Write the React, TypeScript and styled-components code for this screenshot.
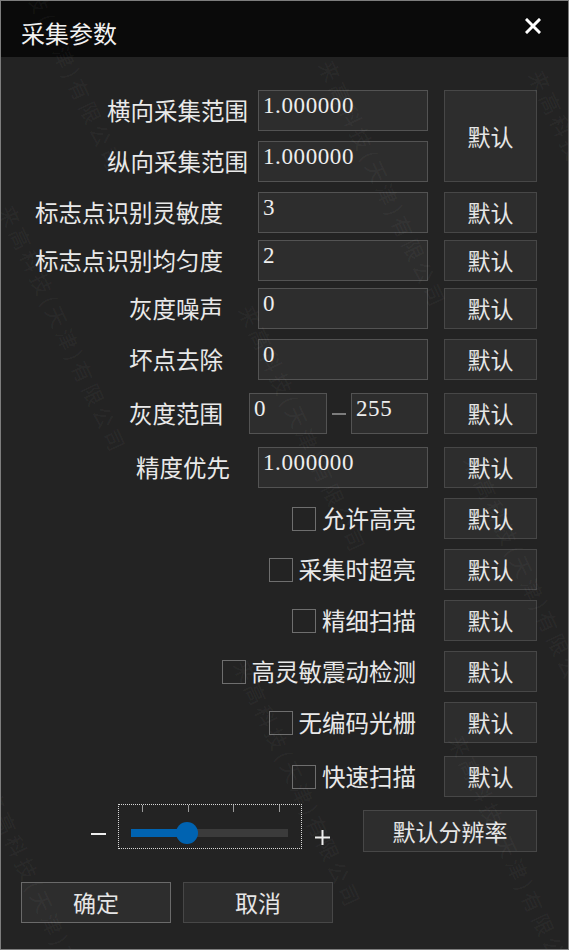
import React, { useState } from "react";
import styled, { createGlobalStyle } from "styled-components";

interface RowProps {
  $mt?: number;
}

interface LabelProps {
  $pr?: number;
}

interface ButtonProps {
  $h?: number;
  $w?: number;
  $ml?: number;
  $primary?: boolean;
}

const marks = [
  { x: 2, y: -92 },
  { x: 5, y: 190 },
  { x: 325, y: 45 },
  { x: 535, y: 55 },
  { x: 245, y: 290 },
  { x: 470, y: 440 },
  { x: 240, y: 645 },
  { x: -10, y: 775 },
  { x: 455, y: 720 },
];

const WATERMARK = "来高科技(天津)有限公司";

function Checkbox({ label, checked, onToggle }: { label: string; checked: boolean; onToggle: () => void }) {
  return (
    <CheckLabel onClick={onToggle}>
      <Box>{checked ? "✓" : ""}</Box>
      <span>{label}</span>
    </CheckLabel>
  );
}

function App() {
  const [checks, setChecks] = useState<boolean[]>([false, false, false, false, false, false]);
  const sliderFill = 56;

  const toggle = (i: number) => {
    const next = [...checks];
    next[i] = !next[i];
    setChecks(next);
  };

  const options = [
    { label: "允许高亮", mt: 10 },
    { label: "采集时超亮", mt: 10 },
    { label: "精细扫描", mt: 10 },
    { label: "高灵敏震动检测", mt: 10 },
    { label: "无编码光栅", mt: 10 },
    { label: "快速扫描", mt: 13 },
  ];

  return (
    <>
      <GlobalStyle />
      <Window>
        <TitleBar>
          <Title>采集参数</Title>
          <Close>
            <svg width="16" height="16" viewBox="0 0 16 16">
              <path d="M2 2 L14 14 M14 2 L2 14" stroke="#fff" strokeWidth="3" strokeLinecap="square" />
            </svg>
          </Close>
        </TitleBar>

        <Body>
          <Pair>
            <PairRows>
              <Row>
                <Label>横向采集范围</Label>
                <Field>1.000000</Field>
              </Row>
              <Row>
                <Label>纵向采集范围</Label>
                <Field>1.000000</Field>
              </Row>
            </PairRows>
            <DefaultButton $h={92}>默认</DefaultButton>
          </Pair>

          <Row $mt={10}>
            <Label $pr={25}>标志点识别灵敏度</Label>
            <Field>3</Field>
            <DefaultButton>默认</DefaultButton>
          </Row>
          <Row $mt={7}>
            <Label $pr={25}>标志点识别均匀度</Label>
            <Field>2</Field>
            <DefaultButton>默认</DefaultButton>
          </Row>
          <Row $mt={7}>
            <Label $pr={25}>灰度噪声</Label>
            <Field>0</Field>
            <DefaultButton>默认</DefaultButton>
          </Row>
          <Row $mt={10}>
            <Label $pr={25}>坏点去除</Label>
            <Field>0</Field>
            <DefaultButton>默认</DefaultButton>
          </Row>
          <Row $mt={13}>
            <Label $pr={16}>灰度范围</Label>
            <Range>
              <SmallField $w={78}>0</SmallField>
              <DashSlot>
                <Dash />
              </DashSlot>
              <SmallField $w={77}>255</SmallField>
            </Range>
            <DefaultButton>默认</DefaultButton>
          </Row>
          <Row $mt={13}>
            <Label $pr={18}>精度优先</Label>
            <Field>1.000000</Field>
            <DefaultButton>默认</DefaultButton>
          </Row>

          {options.map((opt, i) => (
            <Row key={opt.label} $mt={opt.mt}>
              <Checkbox label={opt.label} checked={checks[i]} onToggle={() => toggle(i)} />
              <DefaultButton>默认</DefaultButton>
            </Row>
          ))}

          <SliderRow>
            <Minus />
            <SliderFocus>
              <Ticks>
                <Tick />
                <Tick />
                <Tick />
                <Tick />
              </Ticks>
              <Track>
                <Fill style={{ width: sliderFill }} />
                <Thumb style={{ left: sliderFill - 11 }} />
              </Track>
            </SliderFocus>
            <Plus>
              <svg width="15" height="15" viewBox="0 0 15 15">
                <path d="M0 7.5 H15 M7.5 0 V15" stroke="#eee" strokeWidth="2" />
              </svg>
            </Plus>
            <ResolutionButton $w={174} $h={42} $ml={33}>
              默认分辨率
            </ResolutionButton>
          </SliderRow>

          <Footer>
            <FooterButton $primary>确定</FooterButton>
            <FooterButton>取消</FooterButton>
          </Footer>
        </Body>

        <Watermarks>
          {marks.map((m, i) => (
            <Mark key={i} style={{ left: m.x, top: m.y }}>
              {WATERMARK}
            </Mark>
          ))}
        </Watermarks>
      </Window>
    </>
  );
}

export default App;

const GlobalStyle = createGlobalStyle`
  body {
    margin: 0;
    background: #ffffff;
  }
  * {
    box-sizing: border-box;
  }
`;

const Window = styled.div`
  position: relative;
  overflow: hidden;
  width: 569px;
  height: 950px;
  border: 1px solid #7d7d7d;
  background-color: #232323;
  display: flex;
  flex-direction: column;
  color: #e9e9e9;
  font-family: "Noto Sans CJK SC", "Noto Sans", sans-serif;
`;

const TitleBar = styled.div`
  display: flex;
  justify-content: space-between;
  align-items: flex-start;
  height: 56px;
  padding: 0 27px 0 20px;
  background-color: #0a0a0a;
`;

const Title = styled.div`
  margin-top: 20px;
  font-size: 24px;
  line-height: 24px;
  color: #f2f2f2;
`;

const Close = styled.div`
  margin-top: 14px;
  width: 16px;
  height: 16px;
  cursor: pointer;
`;

const Body = styled.div`
  flex: 1;
  padding: 33px 31px 0 0;
`;

const Pair = styled.div`
  display: flex;
  align-items: flex-start;
`;

const PairRows = styled.div`
  flex: 1;
  display: flex;
  flex-direction: column;
  gap: 10px;
`;

const Row = styled.div<RowProps>`
  display: flex;
  align-items: center;
  height: 41px;
  margin-top: ${(p) => p.$mt || 0}px;
`;

const Label = styled.div<LabelProps>`
  flex: 1;
  text-align: right;
  padding-right: ${(p) => p.$pr || 0}px;
  font-size: 23.5px;
  line-height: 1;
  white-space: nowrap;
`;

const Field = styled.div`
  width: 170px;
  height: 41px;
  margin-left: 10px;
  padding: 3px 4px;
  border: 1px solid #535353;
  background-color: #2d2d2d;
  font-family: "Liberation Serif", serif;
  font-size: 23px;
  line-height: 23px;
  letter-spacing: 0.6px;
  color: #eeeeee;
`;

const Range = styled.div`
  display: flex;
  width: 179px;
  margin-left: 10px;
`;

const SmallField = styled(Field)<{ $w: number }>`
  width: ${(p) => p.$w}px;
  margin-left: 0;
`;

const DashSlot = styled.div`
  width: 24px;
  display: flex;
  align-items: center;
  justify-content: center;
`;

const Dash = styled.span`
  display: block;
  width: 14px;
  height: 2px;
  margin-top: 1px;
  background-color: #7c7c7c;
`;

const DefaultButton = styled.div<ButtonProps>`
  display: flex;
  align-items: center;
  justify-content: center;
  flex-shrink: 0;
  width: ${(p) => p.$w || 93}px;
  height: ${(p) => p.$h || 41}px;
  margin-left: ${(p) => (p.$ml === undefined ? 16 : p.$ml)}px;
  border: 1px solid #474747;
  background-color: #2d2d2d;
  font-size: 23px;
  line-height: 1;
  color: #e6e6e6;
  cursor: pointer;
`;

const ResolutionButton = styled(DefaultButton)`
  margin-top: 6px;
`;

const CheckLabel = styled.label`
  flex: 1;
  display: flex;
  justify-content: flex-end;
  align-items: center;
  gap: 6px;
  padding-right: 12px;
  font-size: 23.5px;
  line-height: 1;
  white-space: nowrap;
  cursor: pointer;
`;

const Box = styled.span`
  display: flex;
  align-items: center;
  justify-content: center;
  width: 24px;
  height: 24px;
  border: 1px solid #6e6e6e;
  font-size: 16px;
`;

const SliderRow = styled.div`
  display: flex;
  justify-content: flex-end;
  align-items: flex-start;
  height: 48px;
  margin-top: 7px;
`;

const Minus = styled.span`
  display: block;
  width: 15px;
  height: 2px;
  margin-top: 29px;
  background-color: #eeeeee;
`;

const SliderFocus = styled.div`
  width: 184px;
  height: 45px;
  margin-left: 12px;
  border: 1px dotted #d8d8d8;
`;

const Ticks = styled.div`
  display: flex;
  gap: 44.5px;
  margin-left: 23px;
  height: 7px;
`;

const Tick = styled.span`
  display: block;
  width: 1px;
  height: 7px;
  background-color: #9a9a9a;
`;

const Track = styled.div`
  position: relative;
  width: 157px;
  height: 8px;
  margin: 17px 0 0 12px;
  background-color: #3b3b3b;
`;

const Fill = styled.div`
  height: 100%;
  background-color: #0063b1;
`;

const Thumb = styled.div`
  position: absolute;
  top: -7px;
  width: 22px;
  height: 22px;
  border-radius: 50%;
  background-color: #0063b1;
`;

const Plus = styled.div`
  width: 15px;
  height: 15px;
  margin: 22px 0 0 13px;
`;

const Footer = styled.div`
  display: flex;
  gap: 12px;
  margin-top: 30px;
  padding-left: 20px;
`;

const FooterButton = styled.div<ButtonProps>`
  display: flex;
  align-items: center;
  justify-content: center;
  width: 150px;
  height: 41px;
  border: 1px solid ${(p) => (p.$primary ? "#6a6a6a" : "#474747")};
  background-color: #2d2d2d;
  font-size: 23px;
  line-height: 1;
  color: #e6e6e6;
  cursor: pointer;
`;

const Watermarks = styled.div`
  position: absolute;
  inset: 0;
  pointer-events: none;
`;

const Mark = styled.span`
  position: absolute;
  transform: rotate(65deg);
  transform-origin: 0 50%;
  white-space: nowrap;
  font-size: 21px;
  letter-spacing: 4px;
  color: rgba(255, 255, 255, 0.055);
`;
